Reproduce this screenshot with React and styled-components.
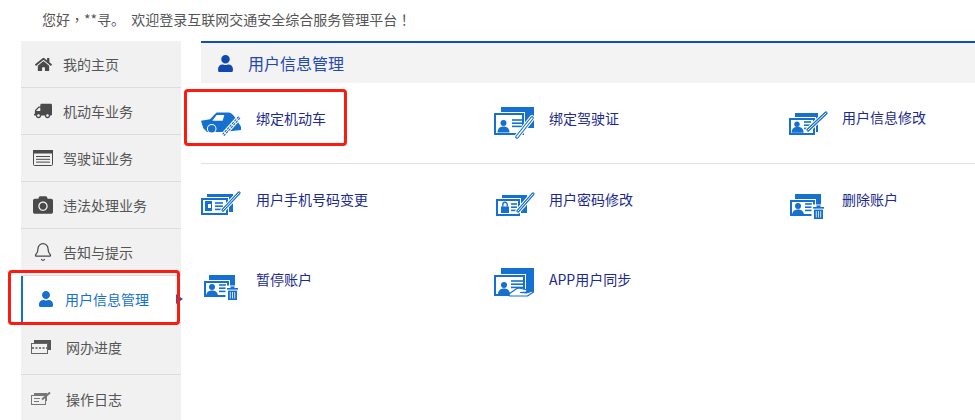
import React from "react";
import styled, { createGlobalStyle } from "styled-components";
import { FaHome, FaTruck, FaCamera, FaUser } from "react-icons/fa";
import { Bell } from "lucide-react";

const BLUE = "#1570cf";

const Global = createGlobalStyle`
  html, body { margin: 0; padding: 0; background: #fff; }
  body { width: 975px; height: 420px; overflow: hidden; font-family: "Noto Sans CJK SC", "Liberation Sans", sans-serif; }
  * { box-sizing: border-box; }
`;

const Page = styled.div`
  position: relative;
  width: 975px;
  height: 420px;
  overflow: hidden;
`;

const Greeting = styled.div`
  height: 41px;
  padding-left: 42px;
  font-size: 14px;
  line-height: 39px;
  color: #555;
  white-space: pre;
`;

const Punct = styled.span`
  font-family: "Noto Sans CJK TC", sans-serif;
`;

const Body = styled.div`
  display: flex;
  align-items: flex-start;
  height: 379px;
`;

const Sidebar = styled.nav`
  flex: none;
  width: 160px;
  height: 379px;
  margin-left: 21px;
  background: #f1f1f1;
`;

const NavRow = styled.div`
  position: relative;
  display: flex;
  align-items: center;
  height: ${(p) => p.$h || 47}px;
  padding-left: ${(p) => (p.$active ? 8 : 10)}px;
  padding-bottom: ${(p) => p.$lift || 0}px;
  border-bottom: 1px solid #dcdcdc;
  border-left: ${(p) => (p.$active ? `2px solid ${BLUE}` : "none")};
  background: ${(p) => (p.$active ? "#fff" : "transparent")};
  color: ${(p) => (p.$active ? BLUE : "#555")};
  font-size: 14px;
  &:last-child { border-bottom: none; }
`;

const NavIcon = styled.span`
  flex: none;
  display: flex;
  align-items: center;
  justify-content: center;
  width: 24px;
  height: 24px;
  margin-right: ${(p) => p.$gap || 8}px;
  margin-left: ${(p) => p.$left || 0}px;
  font-size: ${(p) => p.$size || 17}px;
  color: ${(p) => (p.$active ? BLUE : "#4a4a4a")};
`;

const Flip = styled.span`
  display: flex;
  transform: scaleX(-1);
`;

const Arrow = styled.i`
  position: absolute;
  right: -2px;
  top: 18px;
  width: 0;
  height: 0;
  border-left: 7px solid #1d5fb8;
  border-top: 5px solid transparent;
  border-bottom: 5px solid transparent;
`;

const Main = styled.main`
  flex: none;
  width: 774px;
  margin-left: 20px;
  border-top: 2px solid #0f50b8;
`;

const PanelHead = styled.header`
  display: flex;
  align-items: center;
  height: 40px;
  padding-left: 16px;
  background: #f3f3f3;
  color: #2347b4;
  font-size: 16px;
  & > svg { margin-right: 14px; color: #1148b0; }
`;

const Row = styled.section`
  display: grid;
  grid-template-columns: repeat(3, 293px);
  height: ${(p) => p.$h}px;
  padding-top: ${(p) => p.$top}px;
  border-bottom: ${(p) => (p.$line ? "1px solid #e2e2e2" : "none")};
`;

const Item = styled.div`
  display: flex;
  align-items: flex-start;
  color: #1b2a8f;
  font-size: 14px;
  line-height: 20px;
`;

const Art = styled.svg`
  flex: none;
  width: 45px;
  height: 44px;
  margin-right: 10px;
  color: ${BLUE};
`;

const Label = styled.span`
  margin-top: ${(p) => p.$top ?? 4}px;
`;

const Mark = styled.div`
  position: absolute;
  left: ${(p) => p.$x}px;
  top: ${(p) => p.$y}px;
  width: ${(p) => p.$w}px;
  height: ${(p) => p.$h}px;
  border: 3px solid #fb1b10;
  border-radius: 4px;
  pointer-events: none;
`;

/* ---------- drawn pictograms, in the 45x44 art box ---------- */

const Pen = ({ x1, y1, x2, y2, w = 3.6 }) => (
  <g fill="none" strokeLinecap="round">
    <line x1={x1} y1={y1} x2={x2} y2={y2} stroke="#fff" strokeWidth={w + 2} />
    <line x1={x1} y1={y1} x2={x2} y2={y2} stroke="currentColor" strokeWidth={w} />
    <line x1={x1} y1={y1} x2={x2} y2={y2} stroke="#fff" strokeWidth={w - 2.2} />
  </g>
);

const Sheets = ({ bx, by, bw, bh, fx, fy, fw, fh }) => (
  <>
    <rect x={bx} y={by} width={bw} height={bh} fill="currentColor" />
    <rect x={fx - 1} y={fy - 1} width={fw + 2} height={fh + 2} fill="#fff" />
    <rect x={fx + 1} y={fy + 1} width={fw - 2} height={fh - 2} fill="#fff" stroke="currentColor" strokeWidth="2" />
  </>
);

const Person = ({ cx, top, s = 1 }) => (
  <g fill="currentColor">
    <circle cx={cx} cy={top + 3 * s} r={3 * s} />
    <path d={`M${cx - 6 * s} ${top + 12.5 * s}c0-4 2.5-6 6-6s6 2 6 6z`} />
  </g>
);

const Lines = ({ x, y, w, n = 3, gap = 3.2 }) => (
  <g stroke="currentColor" strokeWidth="1.6">
    {Array.from({ length: n }, (_, i) => (
      <line key={i} x1={x} x2={x + w} y1={y + i * gap} y2={y + i * gap} />
    ))}
  </g>
);

const Bin = ({ x, y }) => (
  <g>
    <rect x={x - 1.5} y={y - 2.5} width="14" height="16" fill="#fff" />
    <rect x={x} y={y} width="11" height="1.6" fill="currentColor" />
    <rect x={x + 3.5} y={y - 1.6} width="4" height="1.6" fill="currentColor" />
    <path d={`M${x + 1} ${y + 2.6}h9v9.4h-9z`} fill="currentColor" />
    <path d={`M${x + 3.3} ${y + 4}v6.5M${x + 5.5} ${y + 4}v6.5M${x + 7.7} ${y + 4}v6.5`} stroke="#fff" strokeWidth="0.8" />
  </g>
);

const Art1 = ({ children }) => (
  <Art viewBox="5 0 45 44" aria-hidden="true">{children}</Art>
);

const CarIcon = () => (
  <Art1>
    <path fill="currentColor" d="M5 16.700L14 15.300L20 9C20.500 8.700 21 8.600 22 8.600H33C35 8.600 37 11 39 13.300L45 22.700V26L27 28H11L7.300 24.300z" />
    <path fill="#fff" d="M20.700 11H28.300L26.700 16.700H16.300z" />
    <circle cx="15.700" cy="24.800" r="4.800" fill="#fff" />
    <circle cx="15.700" cy="24.800" r="3.800" fill="currentColor" />
    <line x1="43.300" y1="13.300" x2="27.300" y2="31" stroke="#fff" strokeWidth="5" />
    <line x1="43.300" y1="13.300" x2="27.300" y2="31" stroke="currentColor" strokeWidth="3" strokeDasharray="2.600 1" />
    <line x1="43.300" y1="13.300" x2="27.300" y2="31" stroke="#fff" strokeWidth="1" />
  </Art1>
);

const LicenseIcon = () => (
  <Art1>
    <Sheets bx={12} by={3} bw={33} bh={21} fx={5} fy={9} fw={30} fh={22} />
    <Person cx={14.500} top={16} />
    <Lines x={23} y={16} w={10} />
    <Pen x1="43" y1="14" x2="28" y2="33" />
  </Art1>
);

const EditUserIcon = () => (
  <Art1>
    <Sheets bx={13} by={9} bw={23} bh={19} fx={7} fy={14} fw={26} fh={17} />
    <Person cx={15} top={17.500} s={0.9} />
    <Lines x={22} y={18} w={7} />
    <Pen x1="44" y1="9" x2="26" y2="26" w={3.2} />
  </Art1>
);

const PhoneIcon = () => (
  <Art1>
    <Sheets bx={11} by={8} bw={26} bh={18} fx={5} fy={12} fw={27} fh={17} />
    <rect x="9" y="15" width="7" height="10" fill="currentColor" />
    <rect x="12" y="18" width="3" height="4" fill="#fff" />
    <Lines x={19} y={17} w={8} n={3} />
    <Pen x1="43" y1="7" x2="27" y2="24" w={3.2} />
  </Art1>
);

const PasswordIcon = () => (
  <Art1>
    <Sheets bx={13} by={9} bw={25} bh={18} fx={7} fy={13} fw={24} fh={17} />
    <rect x="12" y="20.500" width="8" height="6.500" fill="currentColor" />
    <path d="M13.800 20.500v-2a2.200 2.200 0 0 1 4.400 0v2" fill="none" stroke="currentColor" strokeWidth="1.400" />
    <Lines x={22} y={18} w={6} />
    <Pen x1="44" y1="8" x2="29" y2="25" w={3.2} />
  </Art1>
);

const DeleteIcon = ({ dy = 0 }) => (
  <Art1>
    <g transform={`translate(0 ${dy})`}>
      <Sheets bx={13} by={8} bw={26} bh={20} fx={8} fy={14} fw={25} fh={16} />
      <Person cx={16} top={17} />
      <Lines x={23} y={18} w={7} />
      <Bin x={31} y={21} />
    </g>
  </Art1>
);

const SyncIcon = () => (
  <Art1>
    <Sheets bx={12} by={2} bw={33} bh={24} fx={5} fy={9} fw={31} fh={21} />
    <Person cx={15} top={16} />
    <Lines x={22} y={15} w={12} />
    <path d="M20 28l7-5c1-.8 2-1 3.500-.800l6 1.300c2 .5 2 2.500 0 2.700l-5 .3 6 .5 6-2 1 1-6 4-18 0z" fill="#fff" stroke="currentColor" strokeWidth="1.200" strokeLinejoin="round" />
  </Art1>
);

const CardIcon = () => (
  <svg width="20" height="16" viewBox="0 0 20 16" aria-hidden="true">
    <rect x="0.500" y="0.500" width="19" height="15" rx="1" fill="#f1f1f1" stroke="#4a4a4a" />
    <rect x="0" y="0" width="20" height="3.500" fill="#4a4a4a" />
    <path d="M3 6.500h14M3 9.300h14M3 12.100h14" stroke="#4a4a4a" />
  </svg>
);

const Ticket = () => (
  <svg width="20" height="14" viewBox="0 0 20 14" aria-hidden="true">
    <rect x="3" y="0" width="17" height="10" fill="#555" />
    <rect x="0.500" y="3.500" width="16" height="10" fill="#f1f1f1" stroke="#666" />
    <path d="M1 8h15" stroke="#555" strokeWidth="1.500" strokeDasharray="2 1.500" />
  </svg>
);

const LogIcon = () => (
  <svg width="20" height="13" viewBox="0 0 20 13" aria-hidden="true">
    <rect x="3" y="1" width="13" height="8" fill="#777" />
    <rect x="0.500" y="3.500" width="14" height="9" fill="#f1f1f1" stroke="#777" />
    <path d="M3 6.500h6M3 9.500h5" stroke="#777" />
    <path d="M19 0.500l-8 7" stroke="#777" strokeWidth="2" />
  </svg>
);

const nav = [
  { text: "我的主页", icon: <FaHome />, size: 17 },
  { text: "机动车业务", icon: <Flip><FaTruck /></Flip>, size: 18 },
  { text: "驾驶证业务", icon: <CardIcon /> },
  { text: "违法处理业务", icon: <FaCamera />, size: 20 },
  { text: "告知与提示", icon: <Bell size={20} strokeWidth={1.5} /> },
];

export default function App() {
  return (
    <Page>
      <Global />
      <Greeting>
        您好<Punct>，</Punct>**寻。  欢迎登录互联网交通安全综合服务管理平台<Punct>！</Punct>
      </Greeting>
      <Body>
        <Sidebar>
          {nav.map((n) => (
            <NavRow key={n.text}>
              <NavIcon $size={n.size}>{n.icon}</NavIcon>
              {n.text}
            </NavRow>
          ))}
          <NavRow $active>
            <NavIcon $active $left={3} $gap={7} $size={16}><FaUser /></NavIcon>
            用户信息管理
            <Arrow />
          </NavRow>
          <NavRow $h={52} $lift={3}>
            <NavIcon $left={-2} $gap={13}><Ticket /></NavIcon>
            网办进度
          </NavRow>
          <NavRow $h={47}>
            <NavIcon $left={-2} $gap={13}><LogIcon /></NavIcon>
            操作日志
          </NavRow>
        </Sidebar>
        <Main>
          <PanelHead>
            <FaUser size={17} />
            用户信息管理
          </PanelHead>
          <Row $h={81} $top={21} $line>
            <Item><CarIcon /><Label>绑定机动车</Label></Item>
            <Item><LicenseIcon /><Label>绑定驾驶证</Label></Item>
            <Item><EditUserIcon /><Label $top={3}>用户信息修改</Label></Item>
          </Row>
          <Row $h={80} $top={22}>
            <Item><PhoneIcon /><Label $top={3}>用户手机号码变更</Label></Item>
            <Item><PasswordIcon /><Label $top={3}>用户密码修改</Label></Item>
            <Item><DeleteIcon /><Label $top={3}>删除账户</Label></Item>
          </Row>
          <Row $h={80} $top={22}>
            <Item><DeleteIcon dy={1} /><Label $top={3}>暂停账户</Label></Item>
            <Item><SyncIcon /><Label $top={3}>APP用户同步</Label></Item>
          </Row>
        </Main>
      </Body>
      <Mark $x={8} $y={270} $w={172} $h={55} />
      <Mark $x={184} $y={89} $w={163} $h={57} />
    </Page>
  );
}
